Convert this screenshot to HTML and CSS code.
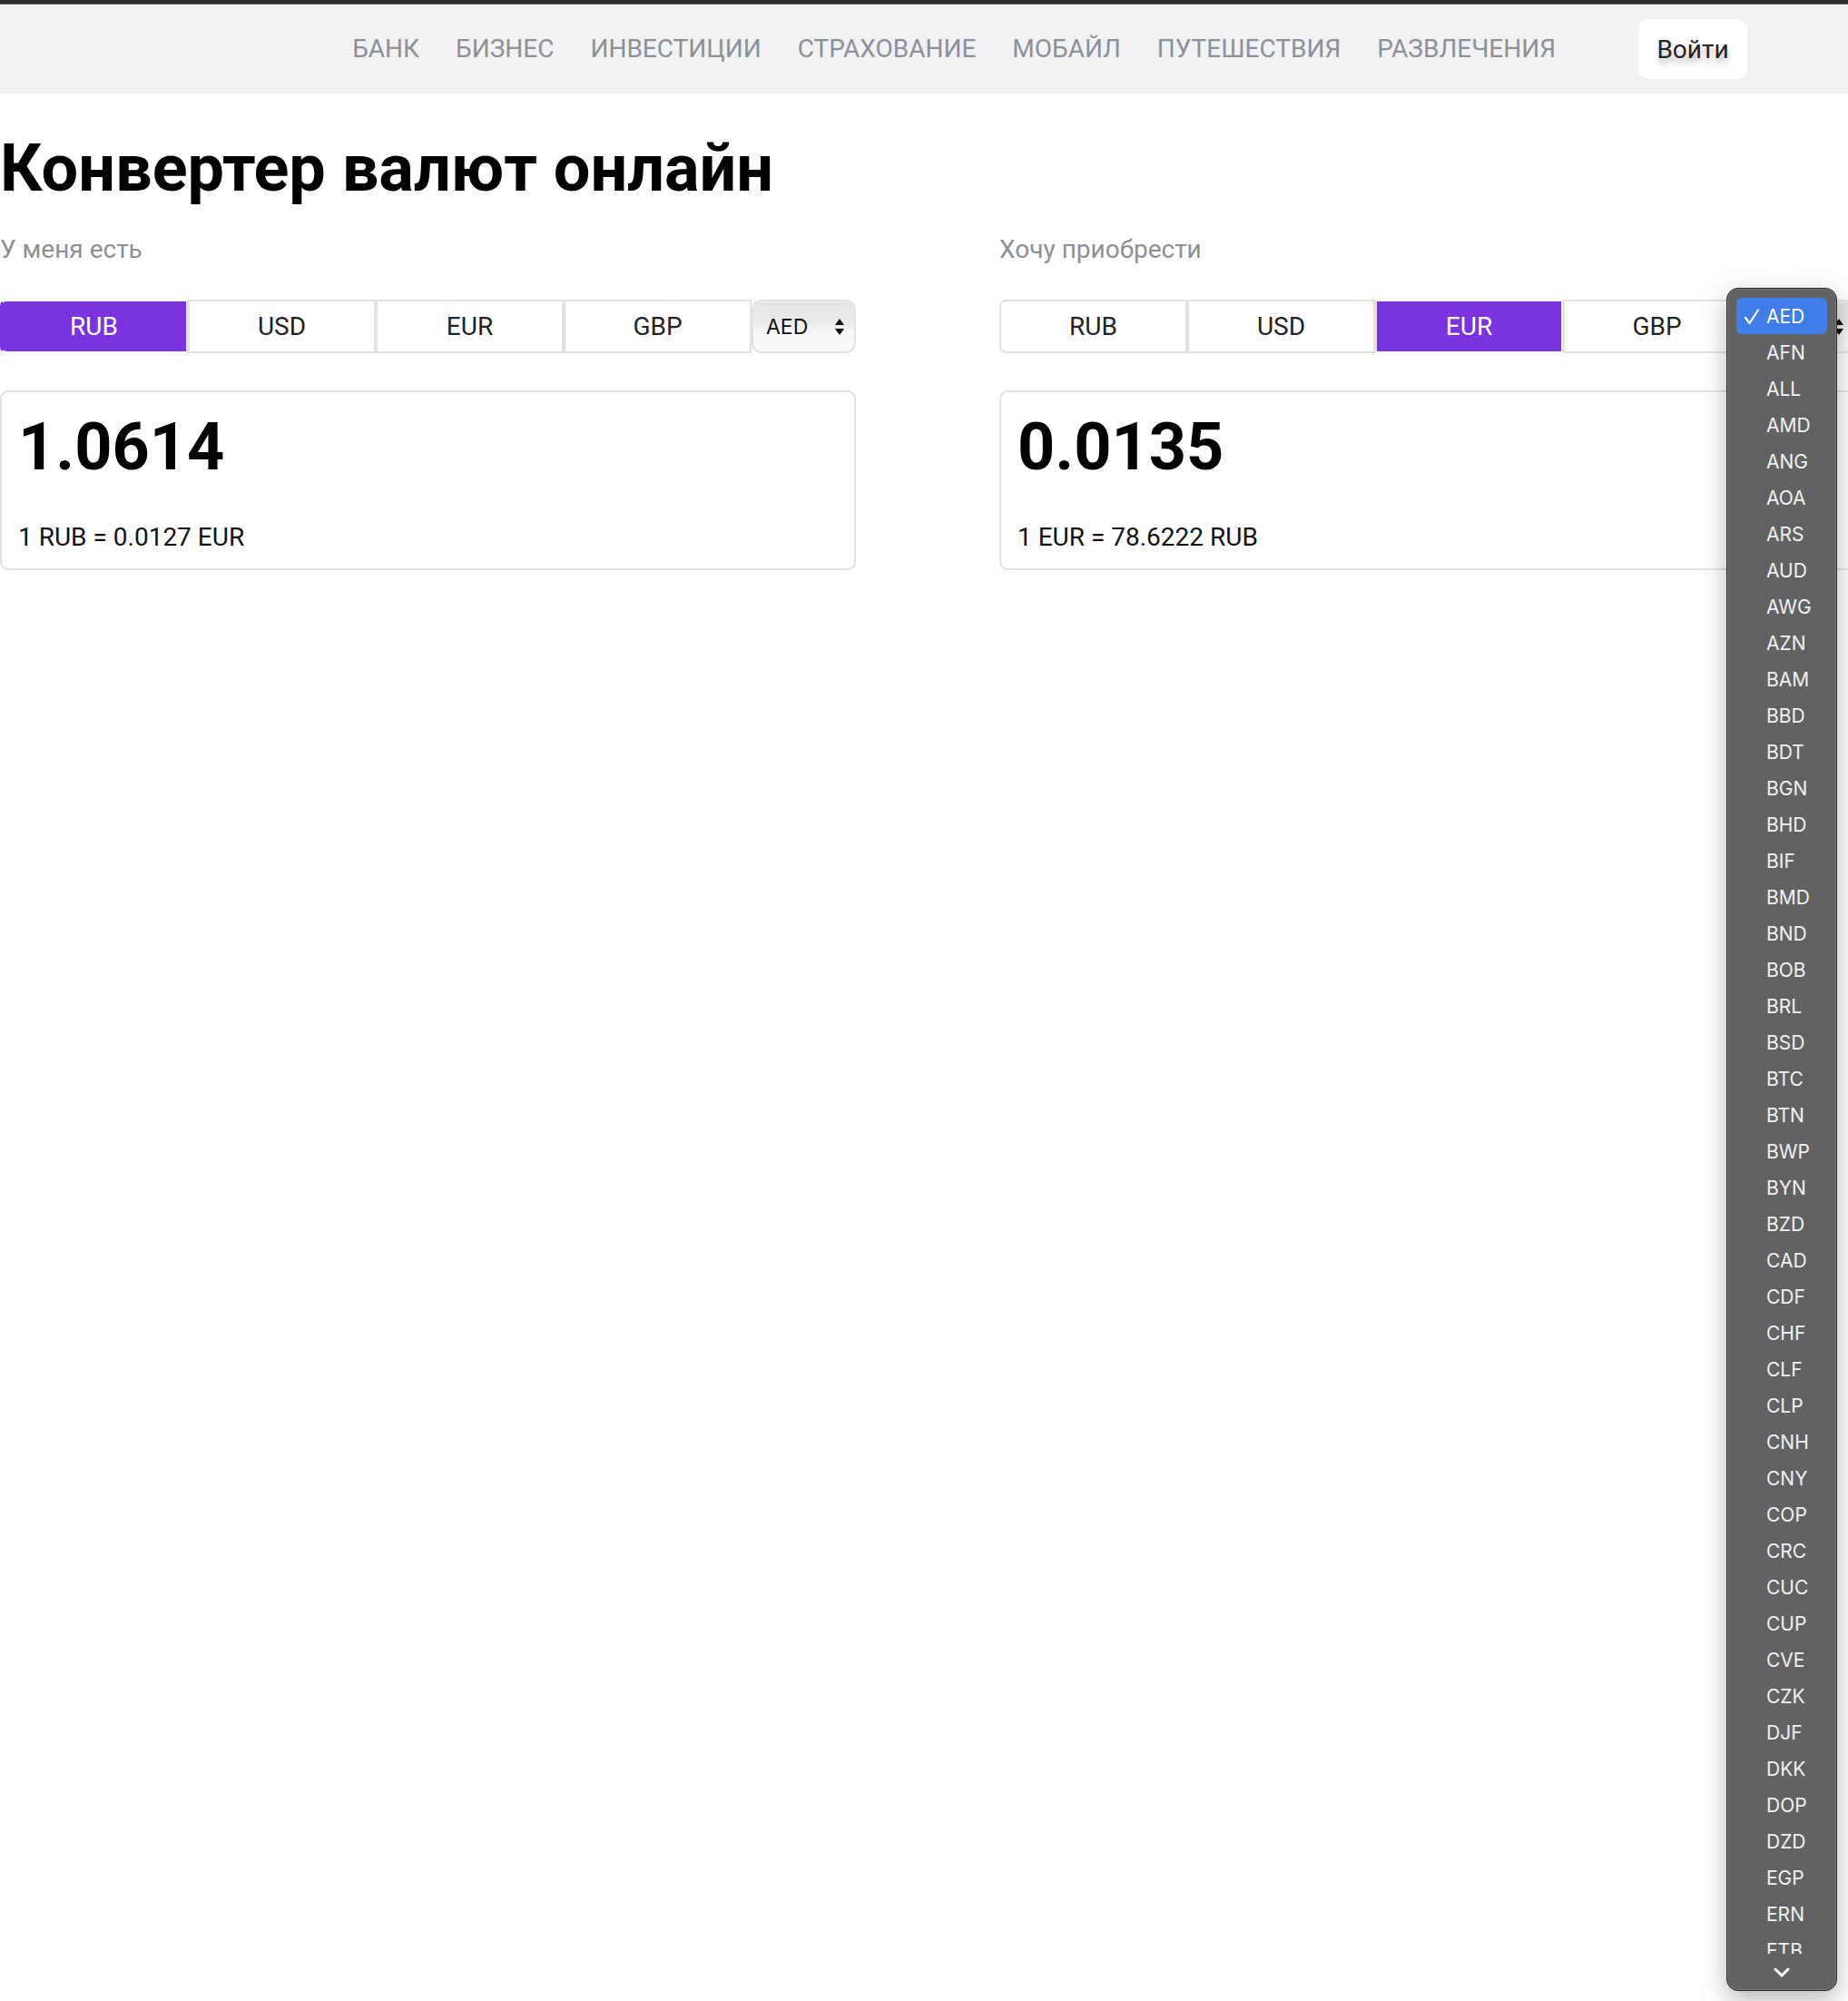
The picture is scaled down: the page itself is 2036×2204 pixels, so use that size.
FILE: index.html
```html
<!DOCTYPE html>
<html lang="ru">
<head>
<meta charset="utf-8">
<title>Конвертер валют онлайн</title>
<link rel="stylesheet" href="styles.css">
</head>
<body>
<div class="topbar"></div>
<header class="nav">
  <nav class="nav-links">
    <a href="#" class="nav-link">БАНК</a>
    <a href="#" class="nav-link">БИЗНЕС</a>
    <a href="#" class="nav-link">ИНВЕСТИЦИИ</a>
    <a href="#" class="nav-link">СТРАХОВАНИЕ</a>
    <a href="#" class="nav-link">МОБАЙЛ</a>
    <a href="#" class="nav-link">ПУТЕШЕСТВИЯ</a>
    <a href="#" class="nav-link">РАЗВЛЕЧЕНИЯ</a>
  </nav>
  <button class="login">Войти</button>
</header>

<main class="page">
  <h1 class="title">Конвертер валют онлайн</h1>
  <div class="columns">
    <section class="col">
      <div class="label">У меня есть</div>
      <div class="tabs">
        <button class="tab tab-active">RUB</button>
        <button class="tab">USD</button>
        <button class="tab">EUR</button>
        <button class="tab">GBP</button>
        <div class="select">
          <span>AED</span>
          <svg class="select-arrows" width="10" height="18" viewBox="0 0 10 18"><path d="M5 0 L10 7 L0 7 Z M5 18 L10 11 L0 11 Z" fill="#111"/></svg>
        </div>
      </div>
      <div class="card">
        <div class="amount">1.0614</div>
        <div class="rate">1 RUB = 0.0127 EUR</div>
      </div>
    </section>
    <section class="col">
      <div class="label">Хочу приобрести</div>
      <div class="tabs">
        <button class="tab">RUB</button>
        <button class="tab">USD</button>
        <button class="tab tab-active">EUR</button>
        <button class="tab">GBP</button>
        <div class="select">
          <span>AED</span>
          <svg class="select-arrows" width="10" height="18" viewBox="0 0 10 18"><path d="M5 0 L10 7 L0 7 Z M5 18 L10 11 L0 11 Z" fill="#111"/></svg>
        </div>
      </div>
      <div class="card">
        <div class="amount">0.0135</div>
        <div class="rate">1 EUR = 78.6222 RUB</div>
      </div>
    </section>
  </div>
</main>

<div class="menu">
  <ul class="menu-list">
    <li class="menu-item menu-item-selected"><svg class="check" width="18" height="18" viewBox="0 0 18 18"><path d="M2 10 L6.5 16 L16 1.5" fill="none" stroke="#fff" stroke-width="2.2" stroke-linecap="round" stroke-linejoin="round"/></svg>AED</li>
    <li class="menu-item">AFN</li>
    <li class="menu-item">ALL</li>
    <li class="menu-item">AMD</li>
    <li class="menu-item">ANG</li>
    <li class="menu-item">AOA</li>
    <li class="menu-item">ARS</li>
    <li class="menu-item">AUD</li>
    <li class="menu-item">AWG</li>
    <li class="menu-item">AZN</li>
    <li class="menu-item">BAM</li>
    <li class="menu-item">BBD</li>
    <li class="menu-item">BDT</li>
    <li class="menu-item">BGN</li>
    <li class="menu-item">BHD</li>
    <li class="menu-item">BIF</li>
    <li class="menu-item">BMD</li>
    <li class="menu-item">BND</li>
    <li class="menu-item">BOB</li>
    <li class="menu-item">BRL</li>
    <li class="menu-item">BSD</li>
    <li class="menu-item">BTC</li>
    <li class="menu-item">BTN</li>
    <li class="menu-item">BWP</li>
    <li class="menu-item">BYN</li>
    <li class="menu-item">BZD</li>
    <li class="menu-item">CAD</li>
    <li class="menu-item">CDF</li>
    <li class="menu-item">CHF</li>
    <li class="menu-item">CLF</li>
    <li class="menu-item">CLP</li>
    <li class="menu-item">CNH</li>
    <li class="menu-item">CNY</li>
    <li class="menu-item">COP</li>
    <li class="menu-item">CRC</li>
    <li class="menu-item">CUC</li>
    <li class="menu-item">CUP</li>
    <li class="menu-item">CVE</li>
    <li class="menu-item">CZK</li>
    <li class="menu-item">DJF</li>
    <li class="menu-item">DKK</li>
    <li class="menu-item">DOP</li>
    <li class="menu-item">DZD</li>
    <li class="menu-item">EGP</li>
    <li class="menu-item">ERN</li>
    <li class="menu-item">ETB</li>
  </ul>
  <div class="menu-more">
    <svg width="18" height="11" viewBox="0 0 18 11"><path d="M2 2 L9 9 L16 2" fill="none" stroke="#fff" stroke-width="3" stroke-linecap="round" stroke-linejoin="round"/></svg>
  </div>
</div>
</body>
</html>
```

FILE: styles.css
```css
html, body {
  margin: 0;
  padding: 0;
  overflow: hidden;
  background: #fff;
}

body {
  font-family: Roboto, "Liberation Sans", sans-serif;
  color: #000;
  width: 2036px;
  height: 2204px;
  position: relative;
}

.topbar {
  height: 5px;
  background: #2c2c2e;
  border-bottom: 1px solid #6a6a6c;
  box-sizing: border-box;
}

.nav {
  height: 98px;
  background: #f2f2f4;
  display: flex;
  align-items: center;
  justify-content: flex-end;
  padding-right: 111px;
}

.nav-links {
  display: flex;
  gap: 40px;
  margin-right: 91px;
}

.nav-link {
  font-size: 28px;
  color: #8b9099;
  text-decoration: none;
  line-height: 1;
}

.login {
  width: 120px;
  height: 66px;
  border: none;
  border-radius: 12px;
  background: #fff;
  font-family: Roboto, "Liberation Sans", sans-serif;
  font-size: 28px;
  color: #222;
  text-shadow: 0 6px 6px rgba(0, 0, 0, 0.28);
  padding: 0;
  margin: 0;
}

.page {
  padding: 0;
}

.title {
  margin: 46px 0 0 0;
  font-size: 72px;
  line-height: 74px;
  font-weight: 700;
  letter-spacing: 0;
}

.columns {
  display: grid;
  grid-template-columns: 943px 943px;
  column-gap: 158px;
  margin-top: 38px;
}

.label {
  font-size: 28px;
  line-height: 28px;
  color: #8e8e93;
}

.tabs {
  display: flex;
  margin-top: 41px;
  height: 59px;
}

.tab {
  width: 207px;
  height: 59px;
  box-sizing: border-box;
  border: 2px solid #e3e3e3;
  background: #fff;
  font-family: Roboto, "Liberation Sans", sans-serif;
  font-size: 28px;
  color: #222;
  padding: 0;
}

.tab:first-child {
  border-radius: 7px 0 0 7px;
}

.tab-active {
  background: #7a33dd;
  color: #fff;
  border-top-color: #fff;
  border-bottom-color: #fff;
}

.tab-active:first-child {
  border-left-color: #7a33dd;
}

.select {
  width: 115px;
  height: 59px;
  box-sizing: border-box;
  border: 2px solid #e2e2e2;
  border-radius: 11px;
  background: linear-gradient(#e4e4e4 0%, #ebebeb 45%, #f7f7f7 60%, #fafafa 100%);
  box-shadow: inset 0 1px 0 #f3f3f3;
  display: flex;
  align-items: center;
  justify-content: space-between;
  padding: 0 11px 0 14px;
  font-family: "Inter", Roboto, sans-serif;
  font-size: 23px;
  color: #111;
}

.select-arrows {
  display: block;
}

.card {
  margin-top: 41px;
  height: 198px;
  box-sizing: border-box;
  border: 2px solid #e3e3e3;
  border-radius: 9px;
  padding: 25px 18px 0 18px;
}

.amount {
  font-size: 72px;
  line-height: 72px;
  font-weight: 700;
  letter-spacing: 0;
}

.rate {
  margin-top: 49px;
  font-size: 28px;
  line-height: 28px;
  color: #111;
}

.menu {
  position: absolute;
  left: 1902px;
  top: 317px;
  width: 122px;
  height: 1876px;
  box-sizing: border-box;
  background: #626264;
  border: 1px solid #2a2a2a;
  border-radius: 13px;
  box-shadow: inset 0 0 0 1px #7a7a7c, 0 10px 28px rgba(0, 0, 0, 0.28);
  padding: 10px 10px 0 10px;
  font-family: "Inter", "Liberation Sans", sans-serif;
  overflow: hidden;
}

.menu-list {
  list-style: none;
  margin: 0;
  padding: 0;
  height: 1824px;
  overflow: hidden;
}

.menu-item {
  height: 40px;
  display: flex;
  align-items: center;
  padding-left: 33px;
  font-size: 21px;
  color: #f2f2f2;
  position: relative;
  border-radius: 6px;
}

.menu-item-selected {
  background: #3f7ee8;
  color: #fff;
}

.check {
  position: absolute;
  left: 8px;
  top: 12px;
  display: block;
}

.menu-more {
  height: 41px;
  display: flex;
  align-items: center;
  justify-content: center;
  padding-bottom: 2px;
}

.menu-more svg {
  display: block;
}
```
